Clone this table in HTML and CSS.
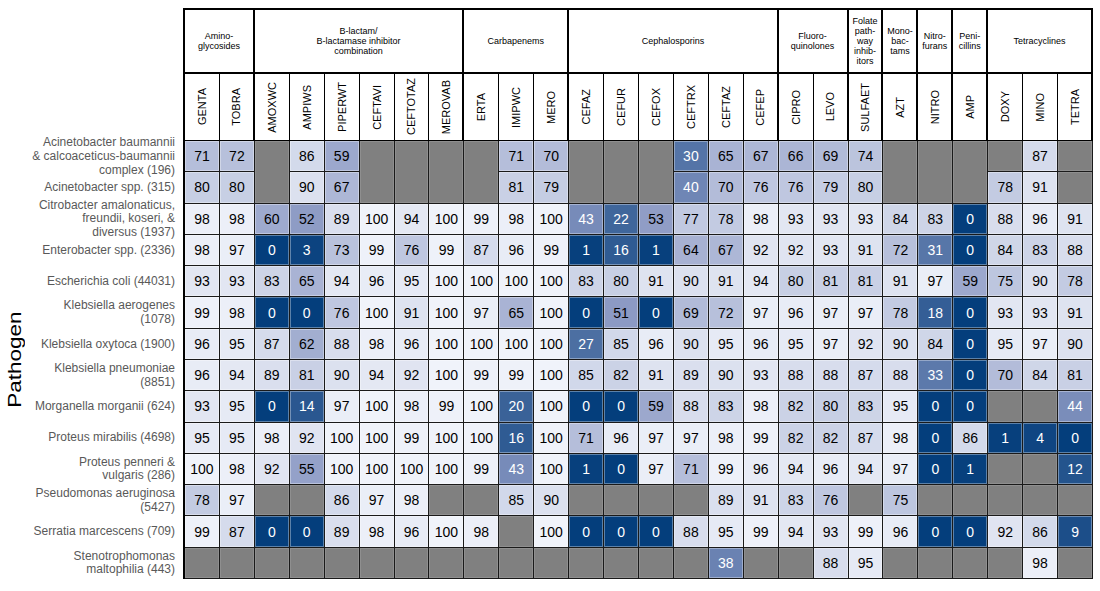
FILE: index.html
```html
<!DOCTYPE html>
<html lang="en">
<head>
<meta charset="utf-8">
<title>Antibiogram</title>
<link rel="stylesheet" href="styles.css">
</head>
<body>
<div class="chart">
  <div class="side">
    <div class="side-head"></div>
    <div class="side-body">
      <div class="ylabel-wrap"><span class="ylabel">Pathogen</span></div>
      <div class="names">
        <div class="name">Acinetobacter baumannii<br>&amp; calcoaceticus-baumannii<br>complex (196)</div>
        <div class="name">Acinetobacter spp. (315)</div>
        <div class="name">Citrobacter amalonaticus,<br>freundii, koseri, &amp;<br>diversus (1937)</div>
        <div class="name">Enterobacter spp. (2336)</div>
        <div class="name">Escherichia coli (44031)</div>
        <div class="name">Klebsiella aerogenes<br>(1078)</div>
        <div class="name">Klebsiella oxytoca (1900)</div>
        <div class="name">Klebsiella pneumoniae<br>(8851)</div>
        <div class="name">Morganella morganii (624)</div>
        <div class="name">Proteus mirabilis (4698)</div>
        <div class="name">Proteus penneri &amp;<br>vulgaris (286)</div>
        <div class="name">Pseudomonas aeruginosa<br>(5427)</div>
        <div class="name">Serratia marcescens (709)</div>
        <div class="name">Stenotrophomonas<br>maltophilia (443)</div>
      </div>
    </div>
  </div>
  <div class="grid" id="grid">
    <div class="g s2">Amino-<br>glycosides</div>
    <div class="g s6">B-lactam/<br>B-lactamase inhibitor<br>combination</div>
    <div class="g s3">Carbapenems</div>
    <div class="g s6">Cephalosporins</div>
    <div class="g s2">Fluoro-<br>quinolones</div>
    <div class="g">Folate<br>path-<br>way<br>inhib-<br>itors</div>
    <div class="g">Mono-<br>bac-<br>tams</div>
    <div class="g">Nitro-<br>furans</div>
    <div class="g">Peni-<br>cillins</div>
    <div class="g s3">Tetracyclines</div>

    <div class="d"><span>GENTA</span></div>
    <div class="d end"><span>TOBRA</span></div>
    <div class="d"><span>AMOXWC</span></div>
    <div class="d"><span>AMPIWS</span></div>
    <div class="d"><span>PIPERWT</span></div>
    <div class="d"><span>CEFTAVI</span></div>
    <div class="d"><span>CEFTOTAZ</span></div>
    <div class="d end"><span>MEROVAB</span></div>
    <div class="d"><span>ERTA</span></div>
    <div class="d"><span>IMIPWC</span></div>
    <div class="d end"><span>MERO</span></div>
    <div class="d"><span>CEFAZ</span></div>
    <div class="d"><span>CEFUR</span></div>
    <div class="d"><span>CEFOX</span></div>
    <div class="d"><span>CEFTRX</span></div>
    <div class="d"><span>CEFTAZ</span></div>
    <div class="d end"><span>CEFEP</span></div>
    <div class="d"><span>CIPRO</span></div>
    <div class="d end"><span>LEVO</span></div>
    <div class="d end"><span>SULFAET</span></div>
    <div class="d end"><span>AZT</span></div>
    <div class="d end"><span>NITRO</span></div>
    <div class="d end"><span>AMP</span></div>
    <div class="d"><span>DOXY</span></div>
    <div class="d"><span>MINO</span></div>
    <div class="d end"><span>TETRA</span></div>
  </div>
</div>
<script src="script.js"></script>
</body>
</html>
```

FILE: styles.css
```css
* { box-sizing: border-box; }

body {
  margin: 0;
  background: #fff;
  font-family: "Liberation Sans", Arial, sans-serif;
  color: #000;
}

.chart {
  display: flex;
  padding-top: 8px;
}

.side {
  width: 183px;
  flex: none;
  display: flex;
  flex-direction: column;
}

.side-head { height: 133px; }

.side-body {
  height: 438px;
  display: flex;
}

.ylabel-wrap {
  width: 30px;
  display: flex;
  align-items: center;
  justify-content: center;
}

.ylabel {
  writing-mode: vertical-rl;
  transform: rotate(180deg) scaleY(1.25);
  font-size: 18px;
  color: #000;
}

.names {
  flex: 1;
  display: grid;
  grid-template-rows: repeat(14, minmax(0, 1fr));
  padding-right: 8px;
}

.name {
  min-height: 0;
  display: flex;
  align-items: center;
  justify-content: flex-end;
  text-align: right;
  font-size: 12px;
  line-height: 13.7px;
  color: #595959;
  white-space: nowrap;
}

.grid {
  width: 910px;
  height: 571px;
  flex: none;
  display: grid;
  grid-template-columns: repeat(26, minmax(0, 1fr));
  grid-template-rows: 64px 67px repeat(14, minmax(0, 1fr));
  border-left: 2px solid #000;
  border-top: 2px solid #000;
}

.g {
  border-right: 2px solid #000;
  border-bottom: 2px solid #000;
  display: flex;
  align-items: center;
  justify-content: center;
  text-align: center;
  font-size: 9px;
  line-height: 10px;
}

.s2 { grid-column: span 2; }
.s3 { grid-column: span 3; }
.s6 { grid-column: span 6; }

.d {
  border-right: 1px solid #000;
  border-bottom: 1px solid #000;
  display: flex;
  align-items: center;
  justify-content: center;
}

.d.end { border-right-width: 2px; }

.d span {
  writing-mode: vertical-rl;
  transform: rotate(180deg);
  font-size: 11px;
  white-space: nowrap;
}

.c {
  border-right: 1px solid #1a1a1a;
  border-bottom: 1px solid #1a1a1a;
  display: flex;
  align-items: center;
  justify-content: center;
  font-size: 14px;
  color: #000;
  box-shadow: inset 0 0 0 1px rgba(255, 255, 255, 0.35);
}

.c.light { color: #fff; }

.c.na {
  background: #808080;
  box-shadow: inset 0 0 0 1px rgba(255, 255, 255, 0.12);
}

.c.m { grid-row: span 2; }
```

FILE: script.js
```js
(function () {
  var N = null, M = 'M', X = 'x';
  var data = [
    [71,72,M,86,59,M,M,M,M,71,70,M,M,M,30,65,67,66,69,74,M,M,M,N,87,N],
    [80,80,X,90,67,X,X,X,X,81,79,X,X,X,40,70,76,76,79,80,X,X,X,78,91,N],
    [98,98,60,52,89,100,94,100,99,98,100,43,22,53,77,78,98,93,93,93,84,83,0,88,96,91],
    [98,97,0,3,73,99,76,99,87,96,99,1,16,1,64,67,92,92,93,91,72,31,0,84,83,88],
    [93,93,83,65,94,96,95,100,100,100,100,83,80,91,90,91,94,80,81,81,91,97,59,75,90,78],
    [99,98,0,0,76,100,91,100,97,65,100,0,51,0,69,72,97,96,97,97,78,18,0,93,93,91],
    [96,95,87,62,88,98,96,100,100,100,100,27,85,96,90,95,96,95,97,92,90,84,0,95,97,90],
    [96,94,89,81,90,94,92,100,99,99,100,85,82,91,89,90,93,88,88,87,88,33,0,70,84,81],
    [93,95,0,14,97,100,98,99,100,20,100,0,0,59,88,83,98,82,80,83,95,0,0,N,N,44],
    [95,95,98,92,100,100,99,100,100,16,100,71,96,97,97,98,99,82,82,87,98,0,86,1,4,0],
    [100,98,92,55,100,100,100,100,99,43,100,1,0,97,71,99,96,94,96,94,97,0,1,N,N,12],
    [78,97,N,N,86,97,98,N,N,85,90,N,N,N,N,89,91,83,76,N,75,N,N,N,N,N],
    [99,87,0,0,89,98,96,100,98,N,100,0,0,0,88,95,99,94,93,99,96,0,0,92,86,9],
    [N,N,N,N,N,N,N,N,N,N,N,N,N,N,N,38,N,N,88,95,N,N,N,N,98,N]
  ];

  var c0 = [4, 62, 124], c50 = [138, 152, 195], c100 = [240, 243, 250];

  function mix(a, b, t) {
    return 'rgb(' + [0, 1, 2].map(function (i) {
      return Math.round(a[i] + (b[i] - a[i]) * t);
    }).join(',') + ')';
  }

  function color(v) {
    return v <= 50 ? mix(c0, c50, v / 50) : mix(c50, c100, (v - 50) / 50);
  }

  var grid = document.getElementById('grid');
  data.forEach(function (row) {
    row.forEach(function (v) {
      if (v === X) return;
      var el = document.createElement('div');
      el.className = 'c';
      if (v === N || v === M) {
        el.classList.add('na');
        if (v === M) el.classList.add('m');
      } else {
        el.textContent = v;
        el.style.background = color(v);
        if (v < 45) el.classList.add('light');
      }
      grid.appendChild(el);
    });
  });
})();
```
